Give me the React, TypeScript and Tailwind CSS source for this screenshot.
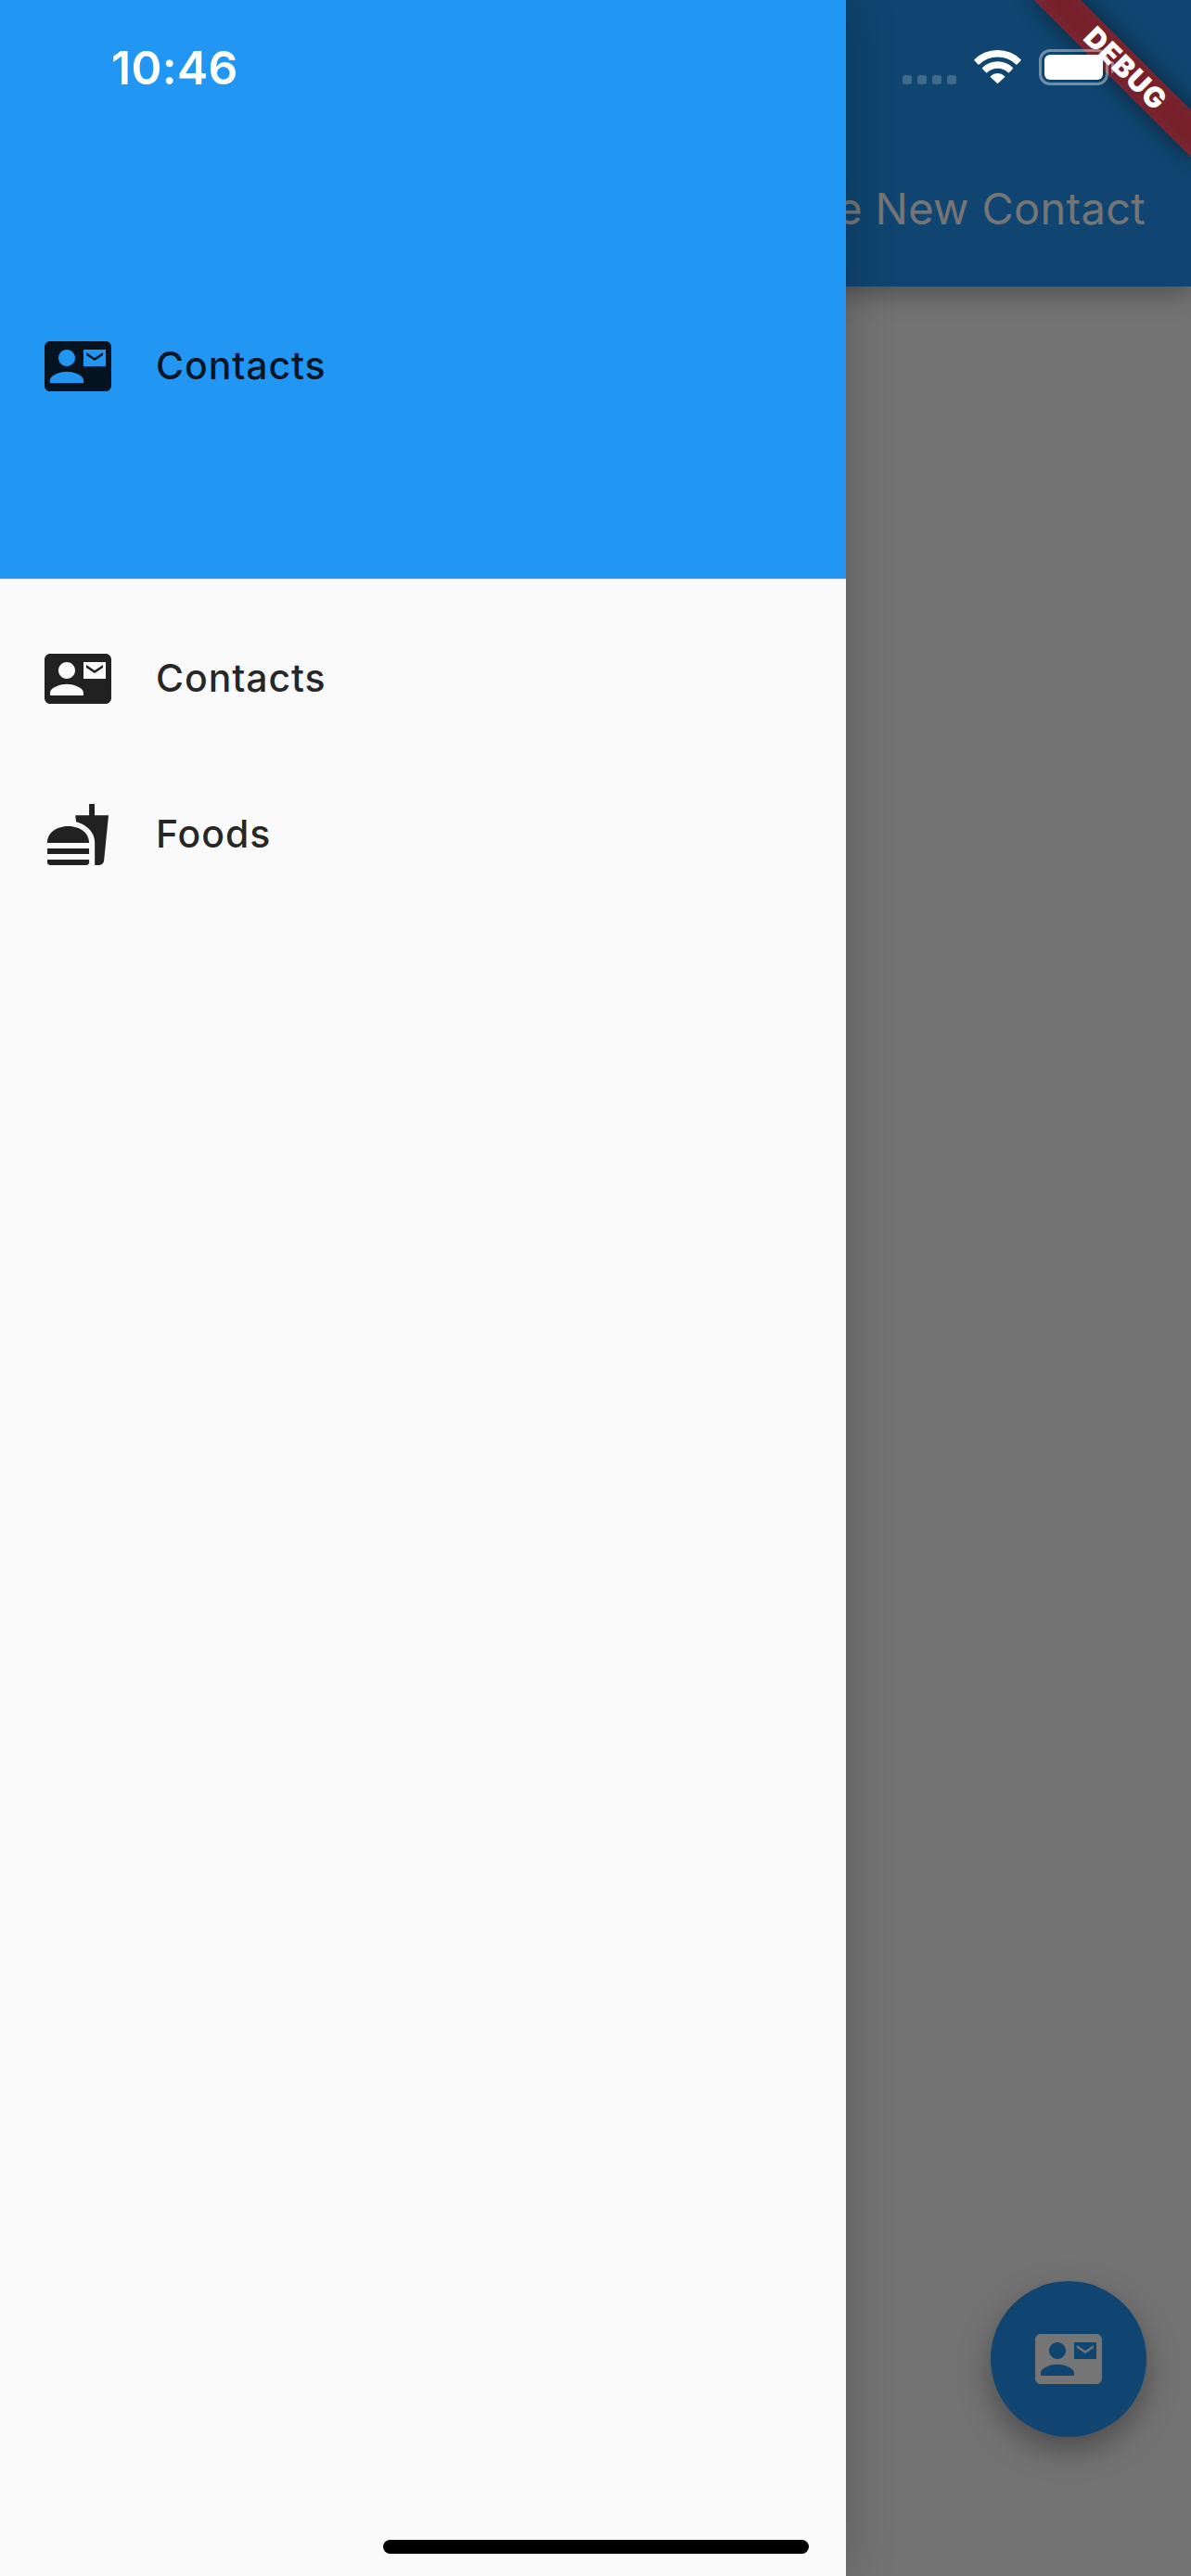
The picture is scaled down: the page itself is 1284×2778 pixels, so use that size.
import React from "react";
import { MdContactMail, MdFastfood } from "react-icons/md";

type RowProps = { icon: React.ReactNode; label: string };

function DrawerTile({ icon, label }: RowProps) {
  return (
    <div className="flex h-[168px] items-center gap-12 px-12 text-black/87">
      {icon}
      <span className="pb-[3px] text-[41px] leading-[60px] font-medium tracking-[0.9px] whitespace-nowrap">{label}</span>
    </div>
  );
}

function WifiIcon() {
  return (
    <svg className="h-[38px] w-[51px]" viewBox="0 0 51 38" fill="white" stroke="white" strokeWidth="1.6" strokeLinejoin="round">
      <path d="M1 11.7A35.2 35.2 0 0 1 50 11.7L45.9 15.9A29.3 29.3 0 0 0 5.1 15.9Z" />
      <path d="M9.6 20.5A22.9 22.9 0 0 1 41.4 20.5L37.4 24.7A17.1 17.1 0 0 0 13.6 24.7Z" />
      <path d="M18.4 29.7A10.2 10.2 0 0 1 32.6 29.7L25.5 36.2Z" />
    </svg>
  );
}

function StatusBar() {
  return (
    <div className="absolute inset-x-0 top-0 flex h-[144px] items-start justify-between pt-[53px] pr-[83px] pl-[120px] text-white">
      <span className="pt-px text-[50px] leading-[39px] font-semibold tracking-[0.3px]">10:46</span>
      <div className="flex items-start">
        <div className="mt-[28px] mr-[19px] flex gap-[6px]">
          {[0, 1, 2, 3].map((i) => (
            <span key={i} className="size-[10px] rounded-[3px] bg-white/20" />
          ))}
        </div>
        <WifiIcon />
        <div className="ml-[19px] h-[39px] w-[75px] rounded-[12px] border-3 border-white/40 p-[3px]">
          <div className="h-[27px] w-[63px] rounded-[6px] bg-white" />
        </div>
        <div className="mt-[13px] ml-[3px] h-[13px] w-[3px] rounded-r-full bg-white/40" />
      </div>
    </div>
  );
}

function DebugBanner() {
  return (
    <div className="absolute top-0 right-0 size-[300px] overflow-hidden">
      <div className="absolute top-0 left-[300px] size-0 rotate-45">
        <div className="absolute top-[84px] left-[-120px] h-[36px] w-[240px] bg-black/50 blur-[12px]" />
        <div className="absolute top-[84px] left-[-120px] flex h-[36px] w-[240px] items-center justify-center bg-[#b71c1c]/63">
          <span className="pl-[5px] text-[30.6px] leading-[36px] font-black tracking-[1px] text-white">DEBUG</span>
        </div>
      </div>
    </div>
  );
}

export default function App() {
  return (
    <div className="relative h-[2778px] w-[1284px] overflow-hidden bg-[#fafafa] font-['Inter',sans-serif]">
      <header className="flex h-[309px] items-end justify-end bg-[#2196f3] pr-[49px] pb-[54px] shadow-[0_8px_26px_rgba(0,0,0,0.3)]">
        <h1 className="text-[47px] leading-[60px] font-normal tracking-[0.3px] whitespace-nowrap text-white">e New Contact</h1>
      </header>
      <button className="absolute right-12 bottom-[150px] flex size-[168px] items-center justify-center rounded-full bg-[#2196f3] text-white shadow-[0_14px_34px_rgba(0,0,0,0.34)]">
        <MdContactMail className="size-[72px]" />
      </button>
      <div className="absolute inset-0 bg-black/54" />
      <aside className="absolute inset-y-0 left-0 w-[912px] bg-[#fafafa] shadow-[0_0_50px_rgba(0,0,0,0.22)]">
        <div className="h-[624px] bg-[#2196f3] pt-[311px]">
          <DrawerTile icon={<MdContactMail className="size-[72px]" />} label="Contacts" />
        </div>
        <nav className="border-t border-black/10 pt-[23px]">
          <DrawerTile icon={<MdContactMail className="size-[72px]" />} label="Contacts" />
          <DrawerTile icon={<MdFastfood className="size-[72px]" />} label="Foods" />
        </nav>
      </aside>
      <DebugBanner />
      <StatusBar />
      <div className="absolute top-[2739px] left-[413px] h-[15px] w-[459px] rounded-full bg-black" />
    </div>
  );
}
